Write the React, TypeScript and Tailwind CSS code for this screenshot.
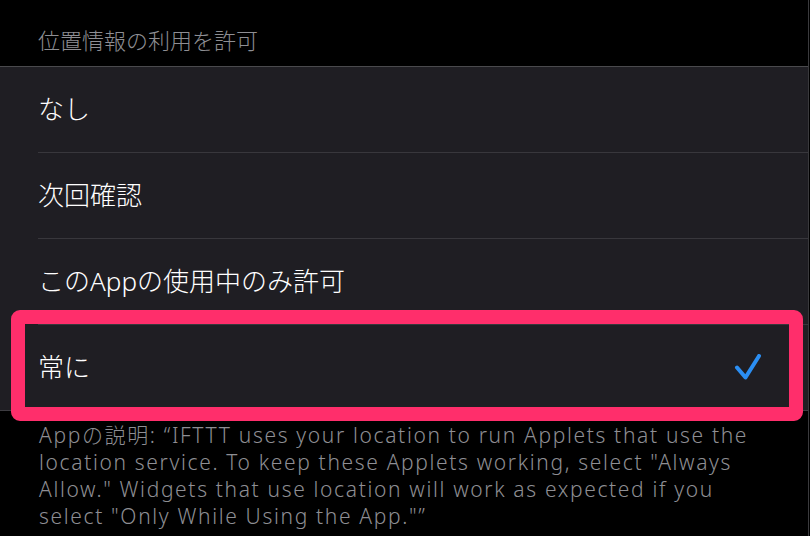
import React from "react";

const rows = ["なし", "次回確認", "このAppの使用中のみ許可", "常に"];

const jp = { fontFamily: '"Noto Sans", "Noto Sans CJK JP", sans-serif' };

export default function App() {
  return (
    <div className="relative flex h-[536px] w-[810px] overflow-hidden bg-black" style={jp}>
      <div className="flex w-[808px] flex-col">
        <div className="flex h-[66px] items-center pl-[38px] pt-[14px] text-[22px] font-light text-[#8e8e93]">
          位置情報の利用を許可
        </div>
        <div className="h-px bg-[#4a4a4d]" />
        <div className="flex flex-col bg-[#1f1e23]">
          {rows.map((r, i) => (
            <div key={r} className="flex flex-col">
              <div className="flex h-[85px] items-center justify-between pl-[38px] pr-[46px] text-[26px] font-light text-white">
                <span>{r}</span>
                {i === 3 && (
                  <svg width="28" height="28" viewBox="0 0 28 28" fill="none">
                    <path
                      d="M3 13.5 L11.5 23.5 L25 2"
                      stroke="#2b8ef2"
                      strokeWidth="4"
                      strokeLinecap="round"
                      strokeLinejoin="round"
                    />
                  </svg>
                )}
              </div>
              {i < 3 ? (
                <div className="ml-[38px] h-px bg-[#38373c]" />
              ) : (
                <div className="h-px bg-[#3d3c41]" />
              )}
            </div>
          ))}
        </div>
        <div className="flex flex-col pl-[39px] pt-[11px] text-[21px] font-light leading-[27px] tracking-[1.65px] text-[#8e8e93]">
          <span className="whitespace-nowrap">Appの説明: “IFTTT uses your location to run Applets that use the</span>
          <span className="whitespace-nowrap">location service. To keep these Applets working, select "Always</span>
          <span className="whitespace-nowrap">Allow." Widgets that use location will work as expected if you</span>
          <span className="whitespace-nowrap">select "Only While Using the App."”</span>
        </div>
      </div>
      <div className="w-px bg-[#3a3a3d]" />
      <div className="w-px bg-black" />
      <div className="absolute left-[11px] top-[310px] h-[111px] w-[792px] rounded-[9px] border-[14px] border-[#ff2e6b]" />
    </div>
  );
}
